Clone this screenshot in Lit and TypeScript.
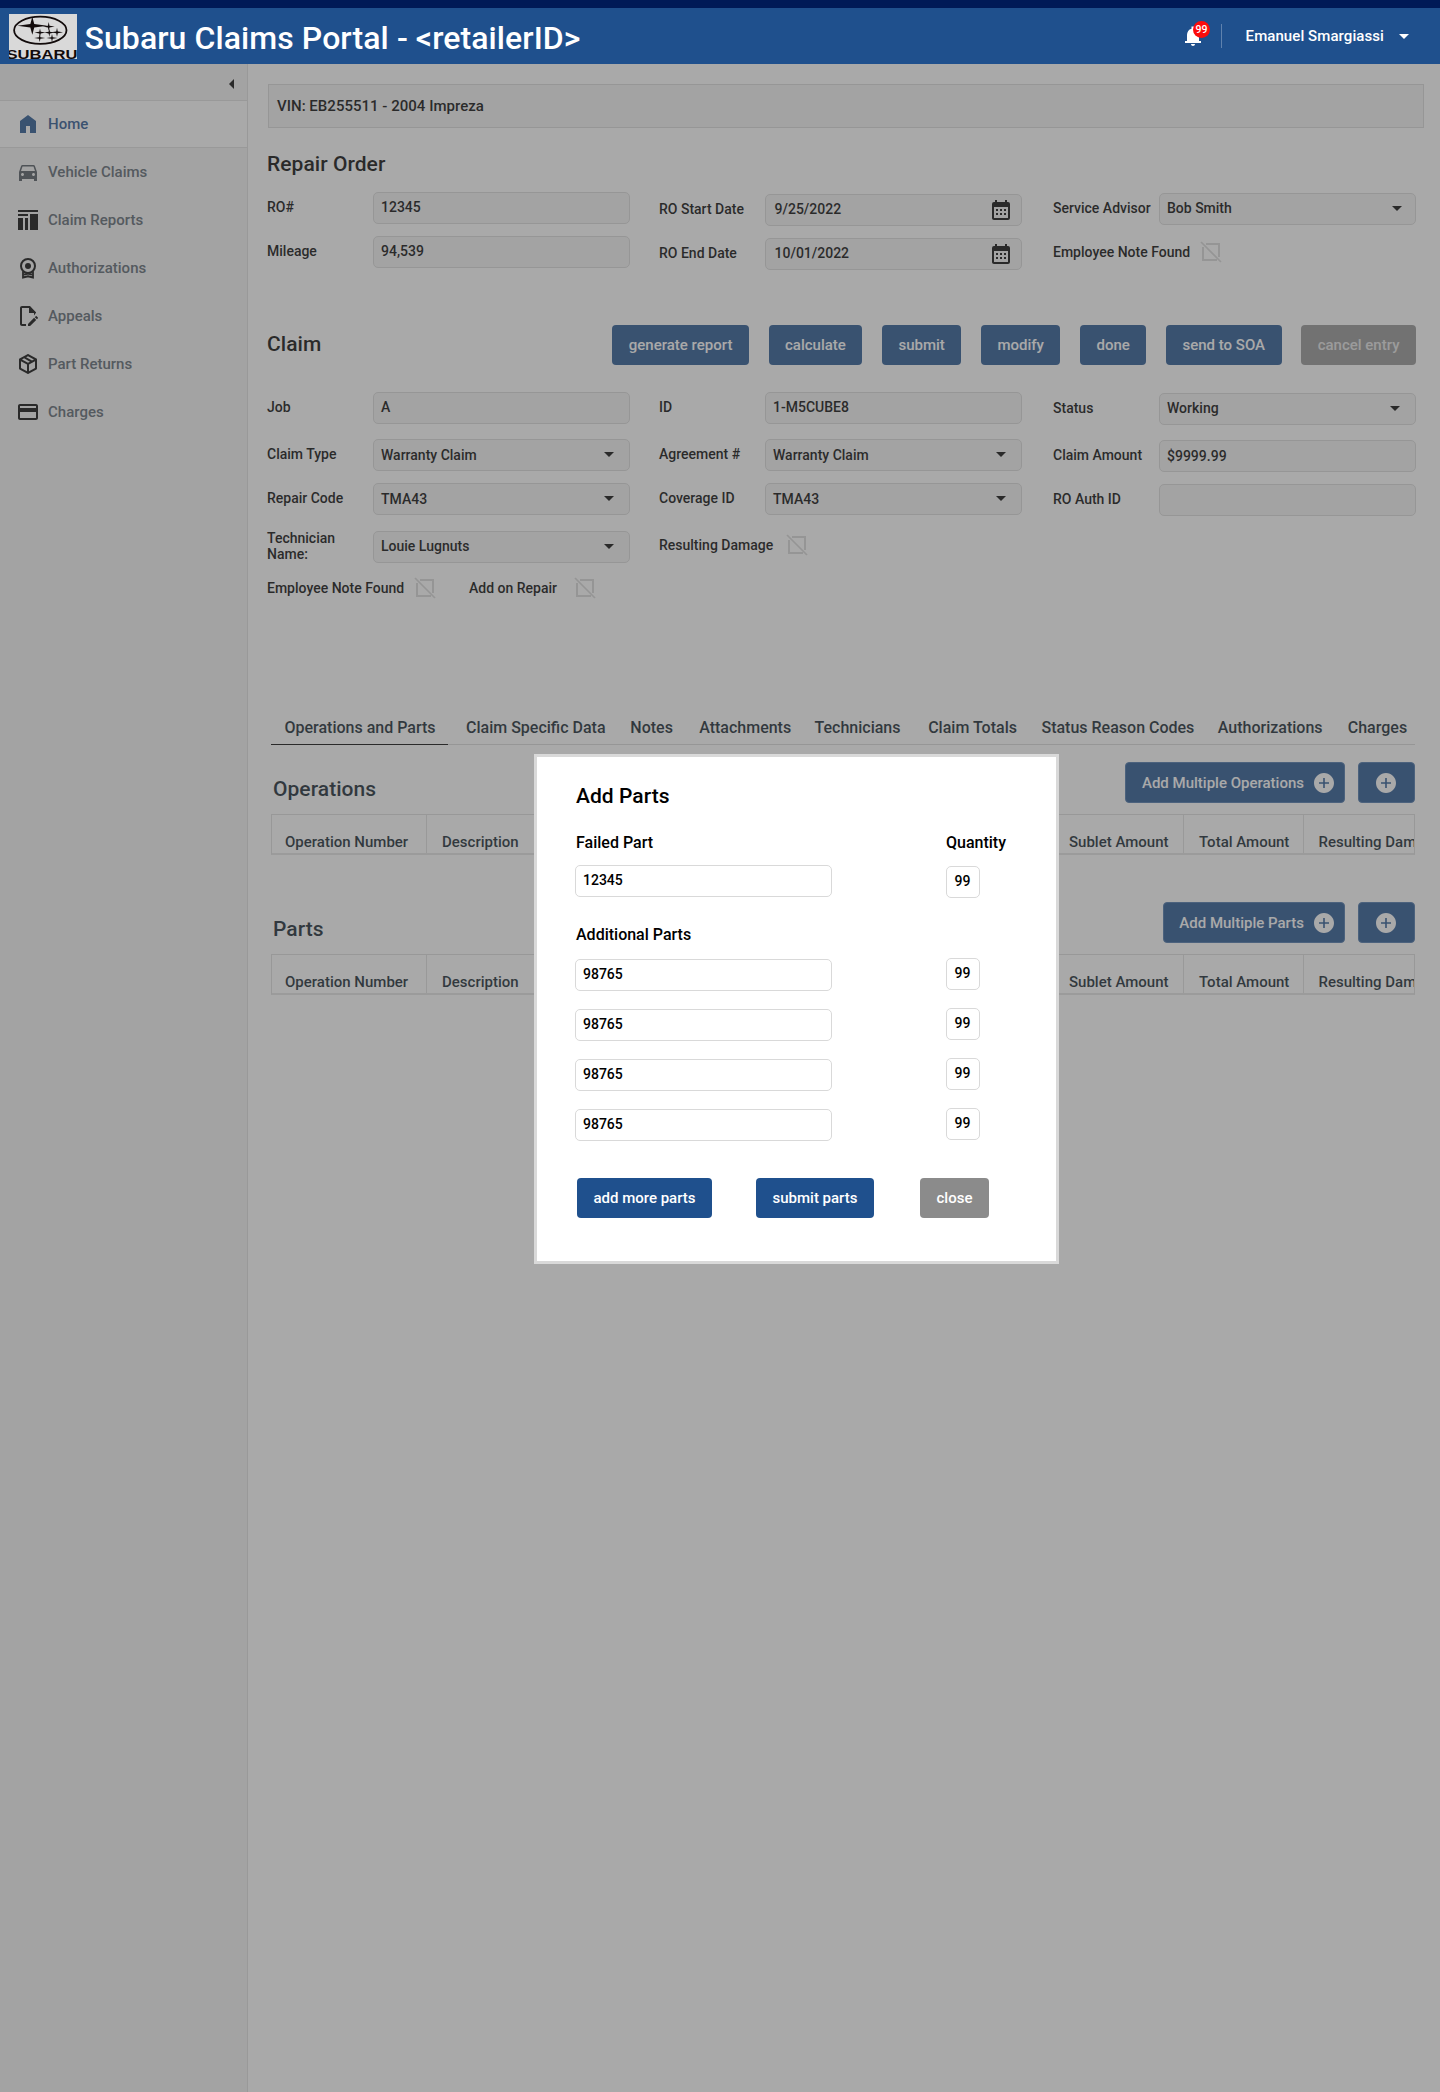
import { LitElement, html, svg, css, nothing } from "lit";
import type { TemplateResult } from "lit";

const icons: Record<string, TemplateResult> = {
  home: svg`<path d="M4 21V9l8-6 8 6v12h-6v-7h-4v7z"/>`,
  car: svg`<path d="M18.92 6.01C18.72 5.42 18.16 5 17.5 5h-11c-.66 0-1.21.42-1.42 1.01L3 12v9h3v-2h12v2h3v-9l-2.08-5.99zM6.5 16c-.83 0-1.5-.67-1.5-1.5S5.67 13 6.5 13s1.5.67 1.5 1.5S7.33 16 6.5 16zm11 0c-.83 0-1.5-.67-1.5-1.5s.67-1.5 1.5-1.5 1.5.67 1.5 1.5-.67 1.5-1.5 1.5zM5 11l1.5-4.5h11L19 11H5z"/>`,
  reports: svg`<path d="M2 2h20v2H2zM2 6h10v2H2zM2 10h5v12H2zM9 10h3v12H9zM14 6h8v16h-8z"/>`,
  medal: svg`<g fill="none" stroke="currentColor" stroke-width="2"><circle cx="12" cy="10" r="7"/><path d="M7 15.5v6l5-1.2 5 1.2v-6M8 18.6l4-1 4 1" stroke-width="1.8"/></g><circle cx="12" cy="10" r="3"/>`,
  appeal: svg`<path d="M10 20H6V4h7v5h5v1.5l2-2L14 2H6c-1.100 0-2 .9-2 2v16c0 1.100.9 2 2 2h4z"/><path d="M13 2l7 6.500-2 3V9h-5z"/><path d="M20.200 13c.1 0 .3.1.4.2l1.300 1.300c.2.2.2.6 0 .8l-1 1-2.100-2.100 1-1c.1-.1.2-.2.4-.2m0 3.900L14.100 23H12v-2.100l6.100-6.100z" transform="translate(0 -1)"/>`,
  box: svg`<path d="M21 16.5C21 16.88 20.79 17.21 20.47 17.38L12.57 21.82C12.41 21.94 12.21 22 12 22S11.59 21.94 11.43 21.82L3.53 17.38C3.21 17.21 3 16.88 3 16.5V7.5C3 7.12 3.21 6.79 3.53 6.62L11.43 2.18C11.59 2.06 11.79 2 12 2S12.41 2.06 12.57 2.18L20.47 6.62C20.79 6.79 21 7.12 21 7.5V16.5M12 4.15L10.11 5.22L16 8.61L17.96 7.5L12 4.15M6.04 7.5L12 10.85L13.96 9.75L8.08 6.35L6.04 7.5M5 15.91L11 19.29V12.58L5 9.21V15.91M19 15.91V9.21L13 12.58V19.29L19 15.91Z"/>`,
  card: svg`<path d="M20 4H4c-1.110 0-1.990.89-1.990 2L2 18c0 1.110.89 2 2 2h16c1.110 0 2-.89 2-2V6c0-1.110-.89-2-2-2zm0 14H4v-6h16v6zm0-10H4V6h16v2z"/>`,
  calendar: svg`<path d="M9 10V12H7V10H9M13 10V12H11V10H13M17 10V12H15V10H17M19 3A2 2 0 0 1 21 5V19A2 2 0 0 1 19 21H5C3.89 21 3 20.1 3 19V5A2 2 0 0 1 5 3H6V1H8V3H16V1H18V3H19M19 19V8H5V19H19M9 14V16H7V14H9M13 14V16H11V14H13M17 14V16H15V14H17Z"/>`,
  bell: svg`<path d="M12 22c1.100 0 2-.9 2-2h-4c0 1.100.9 2 2 2zM4 17h2v-6c0-3.070 1.630-5.640 4.500-6.320V2.500h3v2.180C16.360 5.360 18 7.930 18 11v6h2v2H4z"/>`,
  plus: svg`<path d="M12 2C6.480 2 2 6.480 2 12s4.480 10 10 10 10-4.480 10-10S17.520 2 12 2zm5 10.800h-4.200V17h-1.600v-4.200H7v-1.600h4.200V7h1.600v4.200H17z"/>`,
};

const icon = (name: string) =>
  html`<svg class="icon" width="24" height="24" viewBox="0 0 24 24" fill="currentColor">${icons[name]}</svg>`;

const caret = (extra = "") =>
  html`<svg class="caret ${extra}" width="10" height="5" viewBox="0 0 10 5" fill="currentColor"><path d="M0 0h10L5 5z"/></svg>`;

const box = () => html`<svg class="box" width="18" height="18" viewBox="0 0 18 18" fill="none" stroke="currentColor" stroke-width="2">
  <path d="M4 1h13v13M15 17H1V4"/><path d="M-1-1l20 20" stroke-width="1.700"/></svg>`;

const star = (x: number, y: number, w: number, h: number) => {
  const k = 0.13;
  return svg`<path d="M${x - w} ${y}L${x - w * k} ${y - h * k * 1.5}L${x} ${y - h}L${x + w * k} ${y - h * k * 1.5}L${x + w} ${y}L${x + w * k} ${y + h * k * 1.5}L${x} ${y + h}L${x - w * k} ${y + h * k * 1.5}Z"/>`;
};

type Kind = "text" | "select" | "date";

const nav: [string, string, string][] = [
  ["car", "Vehicle Claims", "muted"],
  ["reports", "Claim Reports", "dark"],
  ["medal", "Authorizations", "dark"],
  ["appeal", "Appeals", "dark"],
  ["box", "Part Returns", "dark"],
  ["card", "Charges", "dark"],
];

const tabs: [string, number][] = [
  ["Claim Specific Data", 164.3],
  ["Notes", 68.9],
  ["Attachments", 115.3],
  ["Technicians", 113.7],
  ["Claim Totals", 113.3],
  ["Status Reason Codes", 176.3],
  ["Authorizations", 130],
  ["Charges", 66],
];

class AppRoot extends LitElement {
  static styles = css`
    :host { display: block; font: 500 14px/16px Roboto, "Liberation Sans", sans-serif; color: #000; }
    * { box-sizing: border-box; }
    svg { display: block; flex: none; }
    .page { position: relative; height: 2092px; background: #fff; overflow: hidden; display: flex; flex-direction: column; }
    .header { height: 64px; flex: none; background: #1f508d; border-top: 8px solid #001a57; color: #fff; display: flex; align-items: flex-start; padding-left: 9px; }
    .logo { margin-top: 6px; }
    .title { margin: 11px 0 0 7.500px; font-size: 32px; line-height: 38px; letter-spacing: 0.08px; flex: 1; }
    .bell { position: relative; width: 24px; height: 24px; margin: 16px 16px 0 0; }
    .badge { position: absolute; left: 12px; top: -3px; width: 17px; height: 17px; border-radius: 50%; background: #fb0c0c; font-size: 10.500px; line-height: 17px; text-align: center; }
    .divider { width: 1px; height: 24px; margin-top: 16px; background: #5f82ae; }
    .user { margin: 19px 15px 0 23.500px; font-size: 15px; line-height: 18px; letter-spacing: 0.080px; }
    .header .caret { margin: 26px 31px 0 0; }
    .body { flex: 1; display: flex; min-height: 0; }
    .side { width: 248px; flex: none; background: #f2f2f2; border-right: 1px solid #dfdfdf; font-size: 15px; color: #55606b; }
    .fold { height: 37px; border-bottom: 1px solid #dfdfdf; padding: 15px 13px 0 0; display: flex; justify-content: flex-end; color: #000; }
    .nav { height: 48px; display: flex; align-items: center; gap: 8px; padding-left: 16px; line-height: 18px; }
    .nav.active { height: 47px; background: #fff; border-bottom: 1px solid #dfdfdf; color: #1f508d; }
    .nav.dark .icon { color: #000; }
    .nav.muted .icon { color: #4b525a; }
    .main { flex: 1; min-width: 0; padding: 20px 16px 0 20px; }
    .vin { height: 44px; border: 1px solid #d9d9d9; background: #f2f2f2; padding: 12px 8px; font-size: 15px; line-height: 18px; letter-spacing: 0.020px; }
    .content { width: 1150px; margin-left: -2px; }
    h2 { margin: 0; font-size: 21px; line-height: 24px; font-weight: 500; letter-spacing: 0.050px; }
    .ro { margin: 24px 0 16px 1px; }
    .form { display: grid; grid-template-columns: 363px 363px 363px; column-gap: 30px; padding-left: 1px; align-items: start; }
    .form > :nth-child(2) { margin-left: -1px; }
    .col { display: flex; flex-direction: column; gap: 12px; }
    .claim .col { gap: 0; }
    .d1 { padding-top: 1px; }
    .d2 { padding-top: 2px; }
    .row { display: grid; grid-template-columns: 106px 257px; height: 32px; align-items: center; }
    .row.gap { margin-bottom: 15px; }
    .row.snug { margin-bottom: 12px; }
    .row.last { margin-bottom: 11px; }
    .label { padding-bottom: 2px; white-space: nowrap; }
    .row.last .label { white-space: normal; padding-right: 20px; }
    .field { height: 32px; width: 257px; border: 1px solid #d9d9d9; border-radius: 5px; background: #f2f2f2; display: flex; align-items: center; justify-content: space-between; padding: 0 15px 0 7px; }
    .field span { padding-bottom: 2px; }
    .field.low span { padding-bottom: 0; }
    .field.date { padding: 0 8px 0 8.500px; }
    .field.date .icon { margin-top: 2px; }
    .caret.near { margin-right: -2px; }
    .field .caret { margin-top: -1px; }
    .check { display: flex; align-items: center; height: 32px; }
    .check .box { color: #d6d6d6; overflow: visible; margin-top: -2px; }
    .w149 { width: 149px; }
    .w129 { width: 129px; }
    .w107 { width: 107px; margin-left: 35px; }
    .bar { display: flex; gap: 19.600px; align-items: center; justify-content: flex-end; margin: 55px 0 27px; padding-left: 1px; }
    .bar h2 { margin: -2px auto 0 0; }
    .btn { height: 40px; border-radius: 4px; background: #1f508d; color: #fff; font-size: 15px; line-height: 18px; padding: 0 16.500px; display: flex; align-items: center; justify-content: center; white-space: nowrap; }
    .btn.gray { background: #919191; color: rgba(255, 255, 255, 0.75); }
    .tabs { display: flex; margin: 112px 0 0 5px; width: 1144px; border-bottom: 1px solid #d9d9d9; font-size: 16px; line-height: 18px; color: #0f1d2a; height: 28px; white-space: nowrap; }
    .tab { padding-top: 2px; }
    .tab.on { width: 177px; height: 28px; padding-left: 13.500px; border-bottom: 1px solid #000; margin-right: 18px; }
    .group { margin: 17px 0 0 5px; width: 1144px; height: 123px; color: #0f1d2a; }
    .ghead { display: flex; gap: 13px; height: 52px; align-items: flex-start; padding-right: 0.500px; }
    .ghead h2 { margin: 15px auto 0 2px; }
    .btn.add { border: 1px solid #4470a6; height: 41px; padding: 0 8px 0 15.500px; gap: 8px; }
    .btn.one { border: 1px solid #4470a6; height: 41px; width: 56.500px; padding: 0; }
    .table { display: flex; height: 41px; border: 1px solid #dcdcdc; border-bottom: 2px solid #e2e2e2; overflow: hidden; font-size: 15px; line-height: 18px; white-space: nowrap; }
    .cell { flex: none; border-right: 1px solid #dfdfdf; padding: 18px 0 0 15px; }
    .c1 { width: 155px; padding-left: 13px; }
    .c2 { width: 108px; }
    .c3 { width: 519px; }
    .c4 { width: 130px; }
    .c5 { width: 119.500px; }
    .c6 { width: 160px; }
    .group + .group { margin-top: 17px; }
    .scrim { position: absolute; left: 0; right: 0; top: 64px; bottom: 0; background: rgba(83, 83, 83, 0.5); }
    .modal { position: absolute; left: 534px; top: 754px; width: 525px; height: 510px; background: #fff; border: 3px solid #d9d9d9; padding: 27px 0 0 38px; }
    .heads { display: grid; grid-template-columns: 370px auto; font-size: 16px; line-height: 18px; margin-top: 26px; padding-left: 1px; }
    .modal h2 { padding-left: 1px; }
    .pairs { display: grid; grid-template-columns: 371px 34px; align-items: start; }
    .pairs .field { background: #fff; }
    .pairs .qty { width: 34px; padding: 0 0 0 7.500px; }
    .first { margin-top: 13px; }
    .first .qty { margin-top: 1px; }
    .more { margin-top: 14px; row-gap: 17px; }
    .more .field:not(.qty) { margin-top: 1px; }
    .heads.second { margin-top: 28px; }
    .actions { display: flex; margin: 37px 0 0 2px; }
    .actions .btn:nth-child(1) { width: 135px; margin-right: 44px; }
    .actions .btn:nth-child(2) { width: 118px; margin-right: 46px; }
    .actions .btn:nth-child(3) { width: 69px; color: #fff; background: #8b8b8b; }
  `;

  private row(label: string, value: string, kind: Kind = "text", cls = "", opt = "") {
    return html`<div class="row ${cls}">
      <div class="label">${label}</div>
      <div class="field ${kind} ${opt}"><span>${value}</span>${kind === "select" ? caret(opt) : kind === "date" ? icon("calendar") : nothing}</div>
    </div>`;
  }

  private group(title: string, action: string) {
    return html`<div class="group">
      <div class="ghead">
        <h2>${title}</h2>
        <div class="btn add">${action}${icon("plus")}</div>
        <div class="btn one">${icon("plus")}</div>
      </div>
      <div class="table">
        <div class="cell c1">Operation Number</div>
        <div class="cell c2">Description</div>
        <div class="cell c3"></div>
        <div class="cell c4">Sublet Amount</div>
        <div class="cell c5">Total Amount</div>
        <div class="cell c6">Resulting Damage</div>
      </div>
    </div>`;
  }

  render() {
    return html`<div class="page">
      <div class="header">
        <svg class="logo" width="68" height="45" viewBox="0 0 68 45">
          <rect width="68" height="45" fill="#d9d9d9"/>
          <ellipse cx="31.300" cy="16.300" rx="26.200" ry="13.600" fill="none" stroke="#120b0b" stroke-width="1.800"/>
          <g fill="#120b0b">${star(23.3, 11.7, 15, 9)}${star(39.7, 12.6, 6, 4.5)}${star(48, 18.3, 6, 4.5)}${star(31, 18.6, 5.5, 4.2)}${star(40.3, 18.6, 5, 4.2)}${star(30.7, 24, 5.5, 4)}${star(43, 24, 5.5, 4)}</g>
          <text x="-2.500" y="44.500" font-family="Liberation Sans, sans-serif" font-weight="700" font-size="13.500" textLength="71" lengthAdjust="spacingAndGlyphs" fill="#120b0b">SUBARU</text>
        </svg>
        <div class="title">Subaru Claims Portal - &lt;retailerID&gt;</div>
        <div class="bell">${icon("bell")}<span class="badge">99</span></div>
        <div class="divider"></div>
        <div class="user">Emanuel Smargiassi</div>
        ${caret()}
      </div>
      <div class="body">
        <div class="side">
          <div class="fold"><svg width="5" height="10" viewBox="0 0 5 10"><path d="M5 0v10L0 5z" fill="currentColor"/></svg></div>
          <div class="nav active">${icon("home")}<span>Home</span></div>
          ${nav.map(([i, t, c]) => html`<div class="nav ${c}">${icon(i)}<span>${t}</span></div>`)}
        </div>
        <div class="main">
          <div class="vin">VIN: EB255511 - 2004 Impreza</div>
          <div class="content">
            <h2 class="ro">Repair Order</h2>
            <div class="form">
              <div class="col">
                ${this.row("RO#", "12345")}
                ${this.row("Mileage", "94,539")}
              </div>
              <div class="col d2">
                ${this.row("RO Start Date", "9/25/2022", "date")}
                ${this.row("RO End Date", "10/01/2022", "date")}
              </div>
              <div class="col d1">
                ${this.row("Service Advisor", "Bob Smith", "select", "", "near")}
                <div class="check"><div class="label w149">Employee Note Found</div>${box()}</div>
              </div>
            </div>
            <div class="bar">
              <h2>Claim</h2>
              ${["generate report", "calculate", "submit", "modify", "done", "send to SOA"].map((t) => html`<div class="btn">${t}</div>`)}
              <div class="btn gray">cancel entry</div>
            </div>
            <div class="form claim">
              <div class="col">
                ${this.row("Job", "A", "text", "gap")}
                ${this.row("Claim Type", "Warranty Claim", "select", "snug", "low")}
                ${this.row("Repair Code", "TMA43", "select", "gap", "low")}
                ${this.row("Technician Name:", "Louie Lugnuts", "select", "last")}
                <div class="check">
                  <div class="label w149">Employee Note Found</div>${box()}
                  <div class="label w107">Add on Repair</div>${box()}
                </div>
              </div>
              <div class="col">
                ${this.row("ID", "1-M5CUBE8", "text", "gap")}
                ${this.row("Agreement #", "Warranty Claim", "select", "snug", "low")}
                ${this.row("Coverage ID", "TMA43", "select", "gap", "low")}
                <div class="check"><div class="label w129">Resulting Damage</div>${box()}</div>
              </div>
              <div class="col d1">
                ${this.row("Status", "Working", "select", "gap")}
                ${this.row("Claim Amount", "$9999.99", "text", "snug", "low")}
                ${this.row("RO Auth ID", "")}
              </div>
            </div>
            <div class="tabs">
              <div class="tab on">Operations and Parts</div>
              ${tabs.map(([t, w]) => html`<div class="tab" style="width:${w}px">${t}</div>`)}
            </div>
            ${this.group("Operations", "Add Multiple Operations")}
            ${this.group("Parts", "Add Multiple Parts")}
          </div>
        </div>
      </div>
      <div class="scrim"></div>
      <div class="modal">
        <h2>Add Parts</h2>
        <div class="heads"><span>Failed Part</span><span>Quantity</span></div>
        <div class="pairs first"><div class="field"><span>12345</span></div><div class="field qty"><span>99</span></div></div>
        <div class="heads second"><span>Additional Parts</span></div>
        <div class="pairs more">
          ${[0, 1, 2, 3].map(() => html`<div class="field"><span>98765</span></div><div class="field qty"><span>99</span></div>`)}
        </div>
        <div class="actions"><div class="btn">add more parts</div><div class="btn">submit parts</div><div class="btn">close</div></div>
      </div>
    </div>`;
  }
}
customElements.define("app-root", AppRoot);
